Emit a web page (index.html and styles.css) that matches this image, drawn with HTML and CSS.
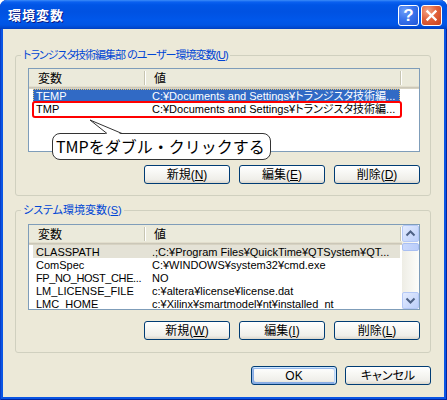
FILE: index.html
```html
<!DOCTYPE html>
<html lang="ja">
<head>
<meta charset="utf-8">
<title>環境変数</title>
<link rel="stylesheet" href="styles.css">
</head>
<body>
<div class="window">
  <div class="titlebar">
    <span class="title">環境変数</span>
    <div class="title-buttons">
      <div class="tb help"><span class="q">?</span></div>
      <div class="tb close">
        <svg width="19" height="19" viewBox="0 0 19 19"><path d="M5.5 5.5 L13.5 13.5 M13.5 5.5 L5.5 13.5" stroke="#fff" stroke-width="2.4" stroke-linecap="square"/></svg>
      </div>
    </div>
  </div>
  <div class="client">
    <fieldset class="group g1">
      <legend>トランジスタ技術編集部 のユーザー環境変数(<u>U</u>)</legend>
      <div class="group-body">
        <div class="listview lv1">
          <div class="lv-main">
            <div class="lv-header">
              <div class="hc hc1">変数</div><div class="sep"></div>
              <div class="hc hc2">値</div><div class="sep"></div>
            </div>
            <div class="row sel"><span class="c1">TEMP</span><span class="c2">C:¥Documents and Settings¥トランジスタ技術編...</span></div>
            <div class="row"><span class="c1">TMP</span><span class="c2">C:¥Documents and Settings¥トランジスタ技術編...</span></div>
          </div>
        </div>
        <div class="btnrow">
          <button class="btn">新規(<u>N</u>)</button>
          <button class="btn">編集(<u>E</u>)</button>
          <button class="btn">削除(<u>D</u>)</button>
        </div>
      </div>
    </fieldset>
    <fieldset class="group g2">
      <legend>システム環境変数(<u>S</u>)</legend>
      <div class="group-body">
        <div class="listview lv2">
          <div class="lv-main">
            <div class="lv-header">
              <div class="hc hc1">変数</div><div class="sep"></div>
              <div class="hc hc2">値</div><div class="sep"></div>
            </div>
            <div class="row isel"><span class="c1">CLASSPATH</span><span class="c2">.;C:¥Program Files¥QuickTime¥QTSystem¥QT...</span></div>
            <div class="row"><span class="c1">ComSpec</span><span class="c2">C:¥WINDOWS¥system32¥cmd.exe</span></div>
            <div class="row"><span class="c1 tight">FP_NO_HOST_CHE...</span><span class="c2">NO</span></div>
            <div class="row"><span class="c1">LM_LICENSE_FILE</span><span class="c2">c:¥altera¥license¥license.dat</span></div>
            <div class="row"><span class="c1">LMC_HOME</span><span class="c2">c:¥Xilinx¥smartmodel¥nt¥installed_nt</span></div>
          </div>
          <div class="scrollbar">
            <div class="sb-btn"><svg width="15" height="15" viewBox="0 0 15 15"><polyline points="3.5,9.5 7.5,5.5 11.5,9.5" fill="none" stroke="#4D6185" stroke-width="2"/></svg></div>
            <div class="sb-thumb"></div>
            <div class="sb-track"></div>
            <div class="sb-btn"><svg width="15" height="15" viewBox="0 0 15 15"><polyline points="3.5,5.5 7.5,9.5 11.5,5.5" fill="none" stroke="#4D6185" stroke-width="2"/></svg></div>
          </div>
        </div>
        <div class="btnrow btnrow2">
          <button class="btn">新規(<u>W</u>)</button>
          <button class="btn">編集(<u>I</u>)</button>
          <button class="btn">削除(<u>L</u>)</button>
        </div>
      </div>
    </fieldset>
    <div class="dlg-buttons">
      <button class="btn default">OK</button>
      <button class="btn">キャンセル</button>
    </div>
  </div>
  <div class="highlight"></div>
  <div class="callout">TMPをダブル・クリックする</div>
  <svg class="callout-tail" width="40" height="18" viewBox="0 0 40 18">
    <polygon points="5,3 22,17.5 37,17.5" fill="#fff"/>
    <polyline points="22,16.5 5,3 37,16.5" fill="none" stroke="#333" stroke-width="1"/>
  </svg>
</div>
</body>
</html>
```

FILE: styles.css
```css
* { box-sizing: border-box; }
html, body { margin: 0; padding: 0; background: #fff; }
body {
  font-family: "Liberation Sans", "Noto Sans CJK JP", sans-serif;
  font-size: 11px;
  font-feature-settings: "palt";
  color: #000;
}
u { text-decoration: underline; text-underline-offset: 1px; }

.window {
  position: relative;
  width: 447px;
  height: 400px;
  background: #0A55E4;
  border-radius: 7px 7px 0 0;
  display: flex;
  flex-direction: column;
  overflow: hidden;
  box-shadow: inset 1px 0 #0A3EC8, inset -1px 0 #0026A0, inset 0 -1px #0026A0;
}

.titlebar {
  height: 29px;
  flex: none;
  display: flex;
  align-items: center;
  padding: 0 5px 0 8px;
  background: linear-gradient(180deg, #3C8CF8 0, #0A60F0 2px, #0055E6 5px, #0052E2 12px, #0057EA 20px, #0054E4 25px, #0046CC 28px, #003DBF 29px);
  border-radius: 7px 7px 0 0;
}
.title {
  flex: 1;
  color: #fff;
  font-family: "Noto Sans CJK JP", sans-serif;
  font-weight: bold;
  font-size: 13px;
  letter-spacing: 1px;
  text-shadow: 1px 1px #0A1883;
  line-height: 16px;
}
.title-buttons { display: flex; gap: 2px; margin-top: 2px; }
.tb {
  width: 21px;
  height: 21px;
  border: 1px solid #fff;
  border-radius: 3px;
  display: flex;
  align-items: center;
  justify-content: center;
}
.help {
  background: radial-gradient(circle at 30% 25%, #6E9EF8 0, #3A74EC 45%, #1F55D8 100%);
}
.help .q {
  font-family: "Liberation Sans", sans-serif;
  font-weight: bold;
  font-size: 17px;
  line-height: 17px;
  color: #fff;
}
.close {
  background: radial-gradient(circle at 30% 25%, #F4A688 0, #E2633C 45%, #C8401C 100%);
}

.client {
  flex: 1;
  margin: 0 3px 3px 3px;
  background: #ECE9D8;
  padding: 19px 13px 0 12px;
}

.group {
  margin: 0;
  padding: 0;
  min-width: 0;
  border: 1px solid #D0D0BF;
  border-radius: 3px;
}
.group legend {
  margin-left: 5px;
  padding: 0 2px;
  color: #0046D5;
  line-height: 14px;
}
.g1 legend { letter-spacing: -1px; }
.group-body { padding: 6px 10px 11px 12px; }
.g2 { margin-top: 7px; }
.g2 .group-body { padding-top: 7px; padding-bottom: 12px; }

.listview {
  border: 1px solid #7F9DB9;
  background: #fff;
  display: flex;
  overflow: hidden;
  height: 84px;
}
.lv2 { height: 86px; }
.lv-main { flex: 1; min-width: 0; overflow: hidden; }
.lv-header {
  height: 20px;
  display: flex;
  align-items: center;
  background: #EBEADB;
  box-shadow: inset 0 -1px #D6D2C2, inset 0 -2px #CBC7B8, inset 0 -3px #E2DECD;
}
.hc { line-height: 16px; white-space: nowrap; font-size: 12px; }
.hc1 { width: 115px; padding-left: 9px; }
.hc2 { width: 254px; padding-left: 8px; }
.sep {
  width: 2px;
  height: 14px;
  margin-top: -2px;
  border-left: 1px solid #C7C5B2;
  border-right: 1px solid #fff;
}

.row {
  display: flex;
  width: 367px;
  height: 13px;
  line-height: 13px;
  padding-top: 1px;
  margin-left: 4px;
  white-space: nowrap;
}
.row .c1 { width: 112px; padding-left: 3px; }
.row .c1.tight { letter-spacing: -0.4px; }
.row .c2 { flex: 1; padding-left: 7px; }
.row.sel {
  background: #316AC5;
  color: #fff;
  outline: 1px dotted #E9C46E;
  outline-offset: -1px;
}
.row.isel { background: #E4E2D6; }

.scrollbar {
  width: 17px;
  flex: none;
  display: flex;
  flex-direction: column;
  background: linear-gradient(90deg, #EEEDE5, #FDFDFA);
}
.sb-btn {
  height: 17px;
  flex: none;
  border: 1px solid #B4C8F6;
  border-radius: 2px;
  background: linear-gradient(135deg, #E3EBFE, #BCCFFA);
  display: flex;
  align-items: center;
  justify-content: center;
}
.sb-thumb {
  height: 8px;
  flex: none;
  margin-top: 1px;
  border: 1px solid #A9BFF2;
  border-radius: 2px;
  background: linear-gradient(90deg, #C9D8FC, #BACDFA);
}
.sb-track { flex: 1; }

.btnrow {
  display: flex;
  justify-content: flex-end;
  gap: 9px;
  margin-top: 13px;
}
.btnrow2 { margin-top: 11px; }
.btn {
  width: 86px;
  height: 19px;
  padding: 0;
  border: 1px solid #003C74;
  border-radius: 3px;
  background: linear-gradient(180deg, #FFFFFF 0%, #F8F8F5 35%, #EFEEE9 80%, #DCD7CC 100%);
  font: inherit;
  font-size: 12px;
  font-feature-settings: "palt";
  line-height: 16px;
  color: #000;
}
.btn.default {
  box-shadow: inset -1px 1px #CEE7FF, inset 1px 2px #98B8EA, inset -2px 2px #BCD4F6, inset 1px -1px #89ADE4, inset 2px -2px #89ADE4;
}
.dlg-buttons {
  display: flex;
  justify-content: flex-end;
  gap: 8px;
  margin-top: 13px;
}

.highlight {
  position: absolute;
  left: 32px;
  top: 101px;
  width: 370px;
  height: 17px;
  border: 2px solid #FF0000;
  border-radius: 3px;
}
.callout {
  position: absolute;
  left: 52px;
  top: 133px;
  width: 219px;
  height: 27px;
  border: 1px solid #333;
  border-radius: 8px;
  background: #fff;
  font-family: "Noto Sans CJK JP", sans-serif;
  font-feature-settings: normal;
  font-size: 16px;
  line-height: 25px;
  padding-left: 3px;
  white-space: nowrap;
}
.callout-tail {
  position: absolute;
  left: 85px;
  top: 117px;
}
```
